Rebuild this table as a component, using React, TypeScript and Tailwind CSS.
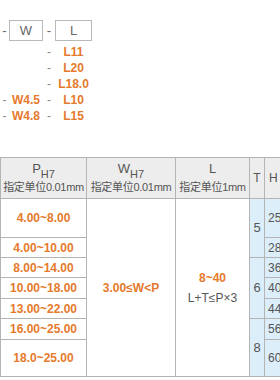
const font = { fontFamily: '"Liberation Sans", Arial, "Noto Sans CJK SC", sans-serif' };

const codeRows = [
  { d1: '', w: '', l: 'L11' },
  { d1: '', w: '', l: 'L20' },
  { d1: '', w: '', l: 'L18.0' },
  { d1: '-', w: 'W4.5', l: 'L10' },
  { d1: '-', w: 'W4.8', l: 'L15' },
];

const rows = [
  { p: '4.00~8.00', h: '25', hClass: 'h-[39px]' },
  { p: '4.00~10.00', h: '28', hClass: 'h-[20px]' },
  { p: '8.00~14.00', h: '36', hClass: 'h-[20px]' },
  { p: '10.00~18.00', h: '40', hClass: 'h-[21px]' },
  { p: '13.00~22.00', h: '44', hClass: 'h-[20px]' },
  { p: '16.00~25.00', h: '56', hClass: 'h-[21px]' },
  { p: '18.0~25.00', h: '60', hClass: 'h-[37px]' },
];

function Cell({ children, className = '', ...rest }: React.TdHTMLAttributes<HTMLTableCellElement>) {
  return (
    <td className={`border border-[#b4b4b4] p-0 text-center align-middle ${className}`} {...rest}>
      {children}
    </td>
  );
}

function Unit({ text }: { text: string }) {
  return <div className="whitespace-nowrap text-[11px] tracking-[-0.3px]">{text}</div>;
}

export default function App() {
  return (
    <div className="relative h-[380px] w-[280px] overflow-hidden bg-white" style={font}>
      <div className="pt-[20px]">
        <div className="grid grid-cols-[9px_34px_12px_37px] items-center text-[13px] text-[#666]">
          <span className="text-center">-</span>
          <span className="flex h-[21px] items-center justify-center border border-[#b9b9b9]">W</span>
          <span className="text-center">-</span>
          <span className="flex h-[21px] items-center justify-center border border-[#b9b9b9]">L</span>
        </div>
        <div className="mt-[3px]">
          {codeRows.map((r) => (
            <div key={r.l} className="grid h-[16px] grid-cols-[9px_34px_12px_37px] items-center text-[12px] leading-none">
              <span className="text-center text-[#888]">{r.d1}</span>
              <span className="text-center font-bold text-[#e57a2c]">{r.w}</span>
              <span className="text-center text-[#888]">-</span>
              <span className="text-center font-bold text-[#e57a2c]">{r.l}</span>
            </div>
          ))}
        </div>
      </div>

      <table className="mt-[33px] w-[320px] table-fixed border-collapse text-[#555]">
        <colgroup>
          <col className="w-[86px]" />
          <col className="w-[89px]" />
          <col className="w-[74px]" />
          <col className="w-[15px]" />
          <col className="w-[56px]" />
        </colgroup>
        <thead>
          <tr className="h-[41px] bg-[#ededed] text-[12px] leading-[18px]">
            <th className="border border-[#b4b4b4] p-0 font-normal">
              <div className="text-[13px]">
                P<sub className="text-[11px] align-[-2px]">H7</sub>
              </div>
              <Unit text="指定单位0.01mm" />
            </th>
            <th className="border border-[#b4b4b4] p-0 font-normal">
              <div className="text-[13px]">
                W<sub className="text-[11px] align-[-2px]">H7</sub>
              </div>
              <Unit text="指定单位0.01mm" />
            </th>
            <th className="border border-[#b4b4b4] p-0 font-normal">
              <div className="text-[13px]">L</div>
              <Unit text="指定单位1mm" />
            </th>
            <th className="border border-[#b4b4b4] p-0 font-normal">T</th>
            <th className="border border-[#b4b4b4] p-0 text-left pl-[4px] font-normal">H</th>
          </tr>
        </thead>
        <tbody className="text-[12px]">
          {rows.map((r, i) => (
            <tr key={r.p} className={r.hClass}>
              <Cell className="font-bold text-[#e57a2c]">{r.p}</Cell>
              {i === 0 && (
                <>
                  <Cell rowSpan={7} className="font-bold text-[#e57a2c]">3.00≤W&lt;P</Cell>
                  <Cell rowSpan={7}>
                    <div className="font-bold text-[#e57a2c]">8~40</div>
                    <div className="mt-[2px] text-[#555]">L+T≤P×3</div>
                  </Cell>
                </>
              )}
              {i === 0 && <Cell rowSpan={2} className="bg-[#dbeefa] text-[13px]">5</Cell>}
              {i === 2 && <Cell rowSpan={3} className="bg-[#dbeefa] text-[13px]">6</Cell>}
              {i === 5 && <Cell rowSpan={2} className="bg-[#dbeefa] text-[13px]">8</Cell>}
              <Cell className="bg-[#dbeefa] pl-[3px] text-left text-[12px]">{r.h}</Cell>
            </tr>
          ))}
        </tbody>
      </table>
    </div>
  );
}
